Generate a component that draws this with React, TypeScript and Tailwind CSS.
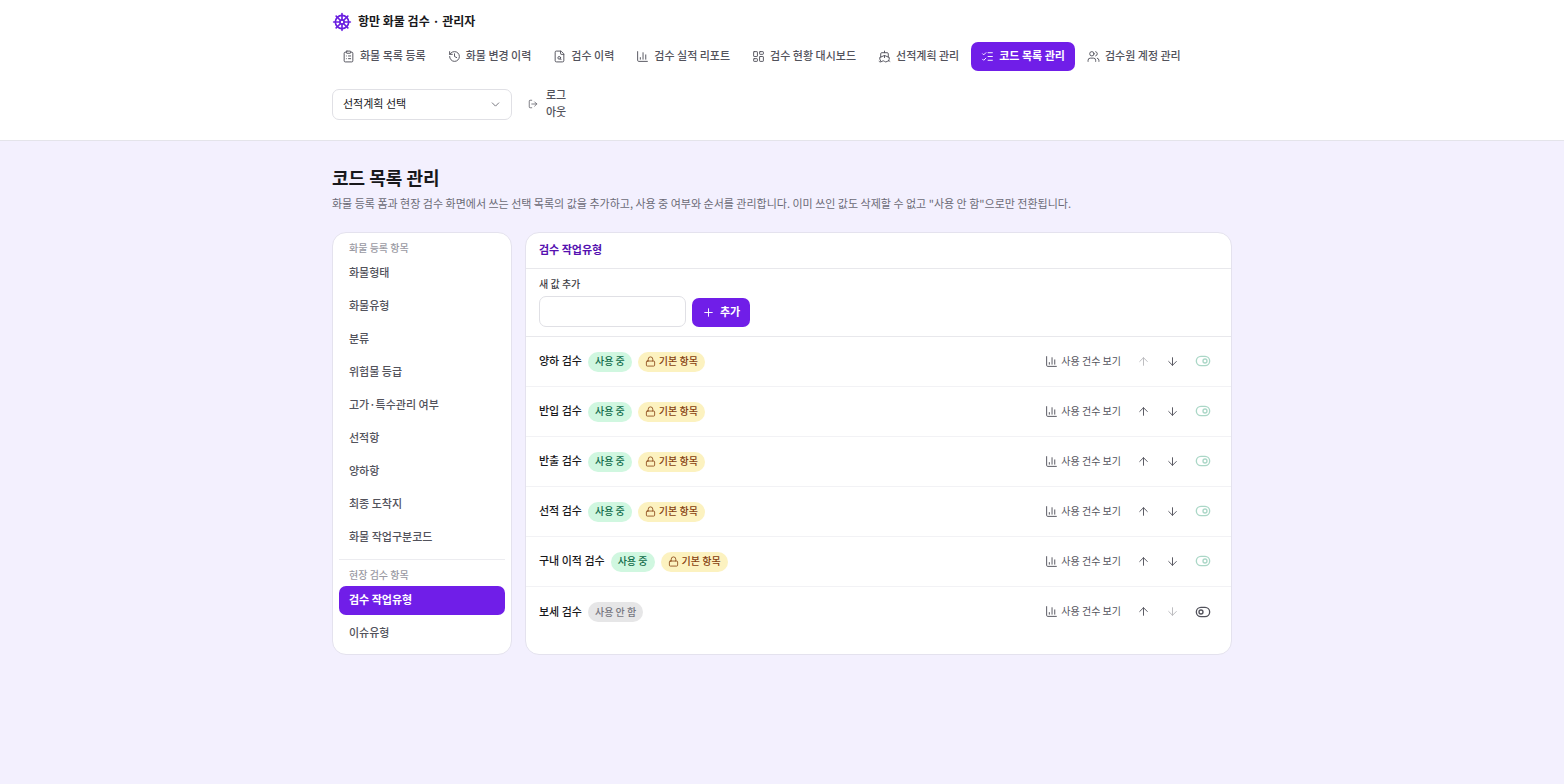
import {
  ArrowDown, ArrowUp, ChartColumn, ChevronDown, ClipboardList, FileSearch, History,
  LayoutDashboard, ListChecks, Lock, LogOut, Plus, Ship, ShipWheel, ToggleLeft, ToggleRight, Users,
} from 'lucide-react';
import clsx from 'clsx';

const navItems = [
  { label: '화물 목록 등록', icon: ClipboardList },
  { label: '화물 변경 이력', icon: History },
  { label: '검수 이력', icon: FileSearch },
  { label: '검수 실적 리포트', icon: ChartColumn },
  { label: '검수 현황 대시보드', icon: LayoutDashboard },
  { label: '선적계획 관리', icon: Ship },
  { label: '코드 목록 관리', icon: ListChecks, active: true },
  { label: '검수원 계정 관리', icon: Users },
];

const groups = [
  {
    title: '화물 등록 항목',
    items: ['화물형태', '화물유형', '분류', '위험물 등급', '고가·특수관리 여부', '선적항', '양하항', '최종 도착지', '화물 작업구분코드'],
  },
  { title: '현장 검수 항목', items: ['검수 작업유형', '이슈유형'] },
];

const selected = '검수 작업유형';

const codes = [
  { label: '양하 검수', active: true, locked: true },
  { label: '반입 검수', active: true, locked: true },
  { label: '반출 검수', active: true, locked: true },
  { label: '선적 검수', active: true, locked: true },
  { label: '구내 이적 검수', active: true, locked: true },
  { label: '보세 검수', active: false, locked: false },
];

function Header() {
  return (
    <header className="border-b border-[#e4e4ea] bg-white">
      <div className="mx-auto max-w-[900px] pt-[11px] pb-[17px]">
        <div className="flex h-5 items-center gap-[6px]">
          <ShipWheel className="mt-[2px] size-5 text-[#6a1fe0]" />
          <span className="text-xs font-bold text-[#18181b]">항만 화물 검수 · 관리자</span>
        </div>
        <nav className="mt-[11px] flex flex-wrap gap-[2px]">
          {navItems.map(({ label, icon: Icon, active }) => (
            <a
              key={label}
              href="#"
              className={clsx(
                'flex h-[29px] items-center gap-[5px] rounded-[7px] px-[10px] text-[11px]',
                active ? 'bg-[#701ee8] font-bold text-white' : 'font-medium text-[#52525b]'
              )}
            >
              <Icon className="size-[13px]" strokeWidth={1.75} />
              <span className="pb-[2px]">{label}</span>
            </a>
          ))}
        </nav>
        <div className="mt-[14px] flex h-[38px] items-center gap-4">
          <div className="relative w-[180px]">
            <select
              aria-label="선적계획 선택"
              className="block h-[31px] w-full appearance-none rounded-[7px] border border-[#e0e0e5] bg-white px-[10px] pb-[2px] text-[11px] text-[#18181b]"
            >
              <option>선적계획 선택</option>
            </select>
            <ChevronDown className="pointer-events-none absolute top-[9px] right-[10px] size-[13px] text-[#71717a]" strokeWidth={1.75} />
          </div>
          <button type="button" className="flex items-center gap-2 text-left text-[11px] leading-[17px] font-medium text-[#52525b]">
            <LogOut className="size-[10px]" strokeWidth={1.75} />
            <span className="pb-[2px]">로그<br />아웃</span>
          </button>
        </div>
      </div>
    </header>
  );
}

function Sidebar() {
  return (
    <aside className="w-[180px] shrink-0 rounded-[14px] border border-[#e4e2ee] bg-white px-[6px] pt-[7px] pb-[6px]">
      {groups.map((group, i) => (
        <div key={group.title} className={clsx(i > 0 && 'mt-[7px] border-t border-[#ececf0] pt-[7px]')}>
          <h2 className="px-[10px] text-[10px] leading-[15px] font-medium text-[#9a9aa3]">{group.title}</h2>
          <ul className="mt-1 space-y-1">
            {group.items.map((item) => (
              <li key={item}>
                <button
                  type="button"
                  className={clsx(
                    'flex h-[29px] w-full items-center rounded-[7px] px-[10px] pb-[2px] text-[11px]',
                    item === selected ? 'bg-[#701ee8] font-bold text-white' : 'font-medium text-[#52525b]'
                  )}
                >
                  {item}
                </button>
              </li>
            ))}
          </ul>
        </div>
      ))}
    </aside>
  );
}

type CodeRowProps = { label: string; active: boolean; locked: boolean; first: boolean; last: boolean };

function CodeRow({ label, active, locked, first, last }: CodeRowProps) {
  const Toggle = active ? ToggleRight : ToggleLeft;
  return (
    <li className="flex h-[50px] items-center justify-between border-b border-[#f2f2f5] px-3 last:border-b-0">
      <div className="flex items-center gap-[6px] pl-px">
        <span className="pb-[2px] text-[11px] font-medium text-[#18181b]">{label}</span>
        <span
          className={clsx(
            'flex h-5 items-center rounded-full px-[7px] pb-[2px] text-[10px] font-medium',
            active ? 'bg-[#d0f7e0] text-[#0f6b48]' : 'bg-[#e6e6e7] text-[#77777f]'
          )}
        >
          {active ? '사용 중' : '사용 안 함'}
        </span>
        {locked && (
          <span className="flex h-5 items-center gap-[3px] rounded-full bg-[#fcf2c0] px-[7px] text-[10px] font-medium text-[#86400f]">
            <Lock className="size-[11px]" strokeWidth={1.75} />
            <span className="pb-[2px]">기본 항목</span>
          </span>
        )}
      </div>
      <div className="flex items-center pb-px text-[#52525b]">
        <button type="button" className="flex items-center gap-[3px] px-2 text-[10px]">
          <ChartColumn className="size-[13px]" strokeWidth={1.75} />
          <span className="pb-[2px]">사용 건수 보기</span>
        </button>
        <button type="button" aria-label="위로 이동" disabled={first} className="flex size-[29px] items-center justify-center disabled:opacity-40">
          <ArrowUp className="size-[13px]" strokeWidth={1.75} />
        </button>
        <button type="button" aria-label="아래로 이동" disabled={last} className="flex size-[29px] items-center justify-center disabled:opacity-40">
          <ArrowDown className="size-[13px]" strokeWidth={1.75} />
        </button>
        <button
          type="button"
          aria-label="사용 여부 전환"
          disabled={locked}
          className={clsx('flex h-[29px] w-8 items-center justify-center disabled:opacity-40', active && 'text-[#2f9e75]')}
        >
          <Toggle className="size-4" />
        </button>
      </div>
    </li>
  );
}

export default function App() {
  return (
    <div className="min-h-screen bg-[#f3f0fe] font-['Noto_Sans_CJK_KR',sans-serif]">
      <Header />
      <main className="mx-auto max-w-[900px] pt-[22px] pb-8">
        <h1 className="text-lg leading-7 font-bold text-[#18181b]">코드 목록 관리</h1>
        <p className="mt-1 text-[11px] leading-4 text-[#6b6b76]">
          화물 등록 폼과 현장 검수 화면에서 쓰는 선택 목록의 값을 추가하고, 사용 중 여부와 순서를 관리합니다. 이미 쓰인 값도 삭제할 수 없고 "사용 안 함"으로만 전환됩니다.
        </p>
        <div className="mt-[21px] flex gap-[13px]">
          <Sidebar />
          <section className="flex-1 rounded-[14px] border border-[#e4e2ee] bg-white">
            <h2 className="border-b border-[#e8e8ec] px-[13px] pt-2 pb-[11px] text-[11px] leading-4 font-bold text-[#5510b0]">{selected}</h2>
            <form className="flex items-end gap-[6px] border-b border-[#e8e8ec] px-[13px] pt-[7px] pb-[9px]" onSubmit={(e) => e.preventDefault()}>
              <div>
                <label htmlFor="new-code" className="block text-[10px] leading-4 font-medium text-[#3f3f46]">새 값 추가</label>
                <input id="new-code" type="text" className="mt-1 block h-[31px] w-[147px] rounded-[7px] border border-[#e0e0e5] px-[10px] text-[11px]" />
              </div>
              <button type="submit" className="flex h-[29px] items-center gap-[5px] rounded-[7px] bg-[#701ee8] px-[10px] text-[11px] font-bold text-white">
                <Plus className="size-[13px]" strokeWidth={1.75} />
                <span className="pb-[2px]">추가</span>
              </button>
            </form>
            <ul>
              {codes.map((code, i) => (
                <CodeRow key={code.label} {...code} first={i === 0} last={i === codes.length - 1} />
              ))}
            </ul>
          </section>
        </div>
      </main>
    </div>
  );
}
